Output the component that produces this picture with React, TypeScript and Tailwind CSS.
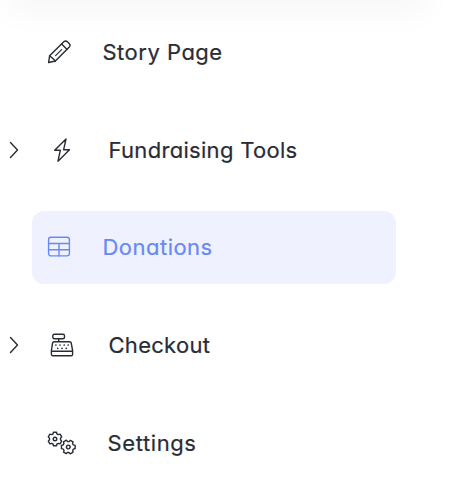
import type { ReactNode } from 'react';
import { clsx } from 'clsx';

interface NavItem {
  name: string;
  icon: ReactNode;
  labelClass: string;
  expandable?: boolean;
  active?: boolean;
}

const gearPath =
  'M-1.5 -6.8H1.5L2 -5L3.3 -4.4L5.1 -4.9L6.7 -2.1L5.5 -.7V.7L6.7 2.1L5.1 4.9L3.3 4.4L2 5L1.5 6.8H-1.5L-2 5L-3.3 4.4L-5.1 4.9L-6.7 2.1L-5.5 .7V-.7L-6.7 -2.1L-5.1 -4.9L-3.3 -4.4L-2 -5Z';

function Icon({ children, className }: { children: ReactNode; className: string }) {
  return (
    <svg
      className={clsx('shrink-0', className)}
      fill="none"
      stroke="currentColor"
      strokeWidth="1.4"
      strokeLinecap="round"
      strokeLinejoin="round"
    >
      {children}
    </svg>
  );
}

const navItems: NavItem[] = [
  {
    name: 'Story Page',
    labelClass: 'ml-[31.5px] tracking-[0.5px]',
    icon: (
      <Icon className="ml-[15px] h-6 w-6">
        <path d="M1.6 22.5L2.6 15.8L16.8 1.8Q18.6 0 20.4 1.8L22.3 3.7Q23.8 5.3 22.3 6.9L8.4 21Z" />
        <path d="M2.6 15.8L5.6 18.2L8.4 21M14.6 3.9L20.1 9.4" />
        <path strokeWidth="1.1" d="M8.6 15.6L14.6 9.6" />
      </Icon>
    ),
  },
  {
    name: 'Fundraising Tools',
    labelClass: 'ml-[34.5px] tracking-[0.3px]',
    expandable: true,
    icon: (
      <Icon className="ml-[18px] h-6 w-6">
        <path d="M16 1L4.7 12.3H10.3L8 23.2L19.5 11.8H13.6Z" />
      </Icon>
    ),
  },
  {
    name: 'Donations',
    labelClass: 'ml-[31.5px] tracking-[0.48px]',
    active: true,
    icon: (
      <Icon className="ml-[15px] h-6 w-6">
        <rect x="1.6" y="2.3" width="20.8" height="18.6" rx="2.3" />
        <path d="M1.6 8.5H22.4M1.6 14.7H22.4M12 8.5V20.9" />
      </Icon>
    ),
  },
  {
    name: 'Checkout',
    labelClass: 'ml-[34.5px] tracking-[0.28px]',
    expandable: true,
    icon: (
      <Icon className="ml-[18px] h-6 w-6">
        <rect x="2.8" y="1.2" width="11.7" height="4.6" rx="1.5" />
        <path d="M8.7 5.8V8.7M4.1 8.7H19.5Q20.9 8.7 21.2 9.8L22.6 17.5V21.2Q22.6 22.8 21 22.8H3Q1.4 22.8 1.4 21.2V17.5L2.6 9.8Q2.8 8.7 4.1 8.7ZM1.4 18.3H22.6" />
        <path strokeWidth="1.7" d="M5.9 12h.01M10 12h.01M14.2 12h.01M18.2 12h.01M7.7 15.3h.01M12 15.3h.01M16.3 15.3h.01" />
      </Icon>
    ),
  },
  {
    name: 'Settings',
    labelClass: 'ml-[30.5px] tracking-[0.6px]',
    icon: (
      <Icon className="ml-[15px] h-6 w-[30px]">
        <g transform="translate(8 8)">
          <path d={gearPath} />
          <circle r="1.8" />
        </g>
        <g transform="translate(21.3 16) rotate(30)">
          <path d={gearPath} />
          <circle r="1.8" />
        </g>
      </Icon>
    ),
  },
];

export default function App() {
  return (
    <div className="h-[492px] w-[450px] overflow-hidden bg-white text-[#2a2c35]">
      {/* Shadow cast by the panel above the menu */}
      <div className="mx-5 h-0 w-[395px] shadow-[0_-4px_34px_12px_rgba(0,0,0,0.05)]" />
      <nav className="flex flex-col gap-[24.7px] pt-[15.5px]">
        {navItems.map((item) => (
          <div key={item.name} className="flex h-[73px] items-center">
            <div className="w-8 shrink-0 pl-2">
              {item.expandable && (
                <Icon className="h-5 w-3">
                  <path d="M2.5 2.5L9.5 10L2.5 17.5" />
                </Icon>
              )}
            </div>
            <a
              href="#"
              className={clsx(
                'flex h-full w-[364px] items-center rounded-xl',
                item.active && 'bg-[#eff2fe] text-[#6889f5]',
              )}
            >
              {item.icon}
              <span
                className={clsx(
                  "whitespace-nowrap font-['Inter',sans-serif] text-[22px] leading-8 [font-feature-settings:'cv11','ss03'] [-webkit-text-stroke:0.2px_currentColor]",
                  item.labelClass,
                )}
              >
                {item.name}
              </span>
            </a>
          </div>
        ))}
      </nav>
    </div>
  );
}
